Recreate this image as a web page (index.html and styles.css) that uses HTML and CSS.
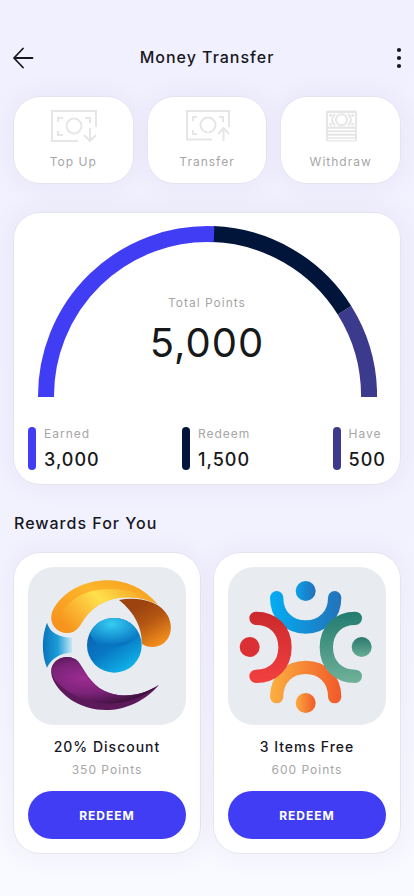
FILE: index.html
```
<!DOCTYPE html>
<html lang="en">

<head>
    <meta charset="UTF-8">
    <meta name="viewport" content="width=device-width, initial-scale=1.0">
    <title>Money Transfer</title>
    <link rel="stylesheet" href="styles.css">
</head>

<body>

    <header class="topbar">
        <button class="icon-btn" type="button" aria-label="Back">
            <svg width="22" height="22" viewBox="0 0 22 22" fill="none" stroke="#17171f" stroke-width="1.8" stroke-linecap="round" stroke-linejoin="round">
                <path d="M20.500 11H2M11 1.500L2 11l9 9.500" />
            </svg>
        </button>
        <h1>Money Transfer</h1>
        <button class="icon-btn icon-btn-right" type="button" aria-label="More options">
            <svg width="6" height="22" viewBox="0 0 6 22" fill="#17171f">
                <circle cx="3" cy="3" r="2.100" />
                <circle cx="3" cy="11" r="2.100" />
                <circle cx="3" cy="19" r="2.100" />
            </svg>
        </button>
    </header>

    <main>
        <section class="actions">
            <button class="card action" type="button">
                <svg width="48" height="32" viewBox="0 0 48 32" fill="none" stroke="#e6e6e6" stroke-width="2">
                    <path d="M29 31H3V1h44v16" />
                    <path d="M9 12V8h5M36 8h5v5M9 21v4h5" />
                    <circle cx="25" cy="16" r="7.500" />
                    <path d="M41 18v13M35 25l6 6 6-6" />
                </svg>
                <span>Top Up</span>
            </button>
            <button class="card action" type="button">
                <svg width="46" height="32" viewBox="0 0 46 32" fill="none" stroke="#e6e6e6" stroke-width="2">
                    <path d="M28 29.500H3V1h42v16" />
                    <path d="M9 11V7h4M35 7h4v5M9 20v4h4" />
                    <circle cx="24" cy="15" r="7.500" />
                    <path d="M39.500 31V18M34 24l5.500-6 5.500 6" />
                </svg>
                <span>Transfer</span>
            </button>
            <button class="card action" type="button">
                <svg width="32" height="32" viewBox="0 0 32 32" fill="none">
                    <rect x="1" y="0.500" width="31" height="31" rx="2" fill="#e6e6e6" />
                    <rect x="3" y="3" width="27" height="13.500" fill="#fff" />
                    <path stroke="#fff" stroke-width="1.5" d="M3 19.500h27M3 23h27M3 26.500h27M3 29.500h27" />
                    <g stroke="#e6e6e6" stroke-width="2">
                        <circle cx="16.500" cy="9.700" r="5.500" />
                        <path d="M10 4Q4 9.700 10 15.500M23 4Q29 9.700 23 15.500" />
                    </g>
                    <g fill="#e6e6e6">
                        <circle cx="5.500" cy="5.300" r="1.500" />
                        <circle cx="27.500" cy="5.300" r="1.500" />
                        <circle cx="5.500" cy="14.200" r="1.500" />
                        <circle cx="27.500" cy="14.200" r="1.500" />
                    </g>
                </svg>
                <span>Withdraw</span>
            </button>
        </section>

        <section class="card points">
            <div class="gauge">
                <svg class="gauge-arc" viewBox="0 0 340 171" fill="none" stroke-width="16">
                    <path stroke="#3c3a8c" d="M307.400 84.200A162 162 0 0 1 332 170V171" />
                    <path stroke="#01153a" d="M176 8.100A162 162 0 0 1 307.400 84.200" />
                    <path stroke="#403df5" d="M9 171A161.500 162 0 0 1 177 8.200" />
                </svg>
                <div class="gauge-text">
                    <p class="label">Total Points</p>
                    <p class="total">5,000</p>
                </div>
            </div>
            <ul class="legend">
                <li class="earned">
                    <p class="label">Earned</p>
                    <p class="value">3,000</p>
                </li>
                <li class="redeemed">
                    <p class="label">Redeem</p>
                    <p class="value">1,500</p>
                </li>
                <li class="have">
                    <p class="label">Have</p>
                    <p class="value">500</p>
                </li>
            </ul>
        </section>

        <h2>Rewards For You</h2>

        <section class="rewards">
            <article class="card reward">
                <svg class="reward-logo" viewBox="0 3 474 474">
                    <defs>
                        <linearGradient id="gold" x1="0" y1="0.600" x2="1" y2="0.200">
                            <stop offset="0" stop-color="#f7941d" />
                            <stop offset="0.500" stop-color="#ffe04d" />
                            <stop offset="1" stop-color="#f59a1c" />
                        </linearGradient>
                        <linearGradient id="goldEdge" x1="0" y1="1" x2="1" y2="0">
                            <stop offset="0" stop-color="#f58a1b" />
                            <stop offset="0.600" stop-color="#fdb62a" />
                            <stop offset="1" stop-color="#f59a1c" />
                        </linearGradient>
                        <linearGradient id="brown" x1="0.300" y1="0.200" x2="0.800" y2="1">
                            <stop offset="0" stop-color="#9c430f" />
                            <stop offset="0.400" stop-color="#b45713" />
                            <stop offset="1" stop-color="#fb951d" />
                        </linearGradient>
                        <linearGradient id="tail" x1="0" y1="0" x2="1" y2="0">
                            <stop offset="0" stop-color="#0873bd" />
                            <stop offset="0.500" stop-color="#1d9bd7" />
                            <stop offset="1" stop-color="#c5e9f5" />
                        </linearGradient>
                        <linearGradient id="ball" x1="0.200" y1="0.200" x2="0.700" y2="1">
                            <stop offset="0" stop-color="#0a63b0" />
                            <stop offset="0.450" stop-color="#0878c4" />
                            <stop offset="1" stop-color="#10b5ea" />
                        </linearGradient>
                        <radialGradient id="shine" cx="0.450" cy="0.200" r="0.700">
                            <stop offset="0" stop-color="#36cdf3" />
                            <stop offset="1" stop-color="#0875c2" />
                        </radialGradient>
                        <radialGradient id="plum" cx="0.300" cy="0.450" r="0.650">
                            <stop offset="0" stop-color="#9c2c91" />
                            <stop offset="0.500" stop-color="#7b2379" />
                            <stop offset="1" stop-color="#3e103d" />
                        </radialGradient>
                    </defs>
                    <path fill="url(#goldEdge)" d="M389 115C345 62 288 41 230 43C153 47 94 88 72 139C62 174 87 201 117 201C149 201 157 174 170 157C203 109 264 87 330 96C352 99 372 107 389 115Z" />
                    <path fill="url(#gold)" d="M389 115C325 66 235 58 167 83C128 99 99 129 84 184C95 197 106 201 117 201C149 201 157 174 170 157C203 109 264 87 330 96C352 99 372 107 389 115Z" />
                    <path fill="url(#brown)" d="M273 102C328 92 394 103 420 150C444 200 414 243 375 243C360 243 349 239 341 233C344 189 320 139 273 102Z" />
                    <path fill="url(#tail)" d="M57 170C66 201 94 214 132 215V260C98 261 71 275 57 305C41 267 40 213 57 170Z" />
                    <circle cx="259" cy="238" r="82" fill="url(#ball)" />
                    <path fill="url(#shine)" d="M185 203C199 169 228 156 259 156C294 156 321 176 333 204C315 231 282 245 248 245C219 244 197 230 185 203Z" />
                    <path fill="#5c1a5b" d="M393 356C343 390 276 399 228 374C187 354 169 312 151 287C129 264 83 270 71 305C62 340 98 381 136 406C220 456 331 431 393 356Z" />
                    <path fill="url(#plum)" d="M393 356C343 390 276 399 228 374C187 354 169 312 151 287C129 264 83 270 71 305C69 323 78 340 91 353C181 436 311 428 393 356Z" />
                </svg>
                <h3>20% Discount</h3>
                <p class="cost">350 Points</p>
                <button class="redeem-btn" type="button">REDEEM</button>
            </article>

            <article class="card reward">
                <svg class="reward-logo" viewBox="0 3 474 474" fill="none" stroke-width="40" stroke-linecap="round">
                    <defs>
                        <linearGradient id="blue" gradientUnits="userSpaceOnUse" x1="126" y1="0" x2="340" y2="0">
                            <stop offset="0" stop-color="#03adf3" />
                            <stop offset="1" stop-color="#2472b9" />
                        </linearGradient>
                        <linearGradient id="blueDot" x1="0" y1="0" x2="1" y2="0">
                            <stop offset="0" stop-color="#0ba0e8" />
                            <stop offset="1" stop-color="#2370b8" />
                        </linearGradient>
                        <linearGradient id="red" gradientUnits="userSpaceOnUse" x1="0" y1="137" x2="0" y2="351">
                            <stop offset="0" stop-color="#ca292c" />
                            <stop offset="1" stop-color="#f34040" />
                        </linearGradient>
                        <linearGradient id="green" gradientUnits="userSpaceOnUse" x1="0" y1="137" x2="0" y2="351">
                            <stop offset="0" stop-color="#217b70" />
                            <stop offset="1" stop-color="#70b199" />
                        </linearGradient>
                        <linearGradient id="greenDot" x1="0" y1="0" x2="0" y2="1">
                            <stop offset="0" stop-color="#29796e" />
                            <stop offset="1" stop-color="#69ad96" />
                        </linearGradient>
                        <linearGradient id="orange" gradientUnits="userSpaceOnUse" x1="126" y1="0" x2="340" y2="0">
                            <stop offset="0" stop-color="#fbb040" />
                            <stop offset="1" stop-color="#f1592a" />
                        </linearGradient>
                        <linearGradient id="orangeDot" x1="0" y1="0" x2="1" y2="0">
                            <stop offset="0" stop-color="#fbaa3e" />
                            <stop offset="1" stop-color="#f1592a" />
                        </linearGradient>
                    </defs>
                    <path stroke="url(#blue)" d="M146 95C146 146 181 183 233 183C285 183 320 146 320 95" />
                    <path stroke="url(#orange)" d="M146 392C146 341 181 304 233 304C285 304 320 341 320 392" />
                    <path stroke="url(#red)" d="M84 157C135 157 171 191 171 244C171 297 135 331 84 331" />
                    <path stroke="url(#green)" d="M382 157C331 157 295 191 295 244C295 297 331 331 382 331" />
                    <circle cx="233" cy="75" r="30" fill="url(#blueDot)" />
                    <circle cx="65" cy="243" r="30" fill="#db3034" />
                    <circle cx="401" cy="243" r="30" fill="url(#greenDot)" />
                    <circle cx="233" cy="411" r="30" fill="url(#orangeDot)" />
                </svg>
                <h3>3 Items Free</h3>
                <p class="cost">600 Points</p>
                <button class="redeem-btn" type="button">REDEEM</button>
            </article>
        </section>
    </main>

</body>

</html>
```
FILE: styles.css
```
* {
    box-sizing: border-box;
}

body {
    font-family: Inter, 'Liberation Sans', sans-serif;
    letter-spacing: 1px;
    color: #17171f;
    background: linear-gradient(#f1f0fe, #f2f1fe 60%, #f9faff);
    min-height: 100vh;
    margin: 0;
    padding: 46px 14px 42px;
}

h1,
h2,
h3,
p,
ul {
    margin: 0;
    padding: 0;
}

button {
    font: inherit;
    letter-spacing: inherit;
    border: none;
    cursor: pointer;
}

.topbar {
    display: grid;
    grid-template-columns: 1fr auto 1fr;
    align-items: end;
    height: 23px;
    margin: 0 -2px 28px;
}

.topbar h1 {
    align-self: start;
    font-size: 16px;
    font-weight: 500;
    line-height: 22px;
}

.icon-btn {
    display: flex;
    justify-self: start;
    padding: 0;
    background: none;
}

.icon-btn-right {
    justify-self: end;
}

.card {
    background-color: #fff;
    border-radius: 26px;
    box-shadow: 0 0 0 1px #e6e4f2, 0 0 30px rgba(70, 55, 140, 0.06);
}

.actions {
    display: grid;
    grid-template-columns: repeat(3, 1fr);
    gap: 15px;
    margin-bottom: 30px;
}

.action {
    display: flex;
    flex-direction: column;
    align-items: center;
    gap: 12px;
    padding: 13px 0;
    font-size: 12px;
    line-height: 16px;
    color: #a6a6a6;
}

.points {
    padding: 13px 14px 14px;
    margin-bottom: 29px;
}

.gauge {
    display: grid;
    justify-items: center;
    margin-bottom: 29px;
}

.gauge-arc,
.gauge-text {
    grid-area: 1 / 1;
}

.gauge-arc {
    width: 95%;
}

.gauge-text {
    align-self: end;
    padding-bottom: 30px;
    text-align: center;
}

.label {
    font-size: 12px;
    line-height: 16px;
    color: #a6a6a6;
}

.total {
    font-size: 40px;
    font-weight: 400;
    line-height: 48px;
    margin-top: 8px;
    color: #17181a;
}

.legend {
    display: flex;
    justify-content: space-between;
    list-style: none;
}

.legend li {
    position: relative;
    padding-left: 16px;
}

.legend li::before {
    content: '';
    position: absolute;
    left: 0;
    top: 1px;
    bottom: 0;
    width: 8px;
    border-radius: 4px;
}

.legend .earned::before {
    background-color: #403df5;
}

.legend .redeemed::before {
    background-color: #01153a;
}

.legend .have::before {
    background-color: #3c3a8c;
}

.value {
    font-size: 18px;
    font-weight: 500;
    line-height: 20px;
    margin-top: 8px;
    color: #17181a;
}

h2 {
    font-size: 16px;
    font-weight: 500;
    line-height: 20px;
    margin-bottom: 20px;
}

.rewards {
    display: grid;
    grid-template-columns: 1fr 1fr;
    gap: 14px;
}

.reward {
    padding: 14px;
    text-align: center;
}

.reward-logo {
    display: block;
    width: 100%;
    background-color: #e8ebf0;
    border-radius: 26px;
}

.reward h3 {
    font-size: 14px;
    font-weight: 500;
    line-height: 20px;
    margin-top: 12px;
}

.cost {
    font-size: 12px;
    line-height: 16px;
    color: #a6a6a6;
    margin: 5px 0 13px;
}

.redeem-btn {
    width: 100%;
    height: 48px;
    border-radius: 24px;
    background-color: #403df5;
    color: #fff;
    font-size: 12px;
    font-weight: 700;
}
```
